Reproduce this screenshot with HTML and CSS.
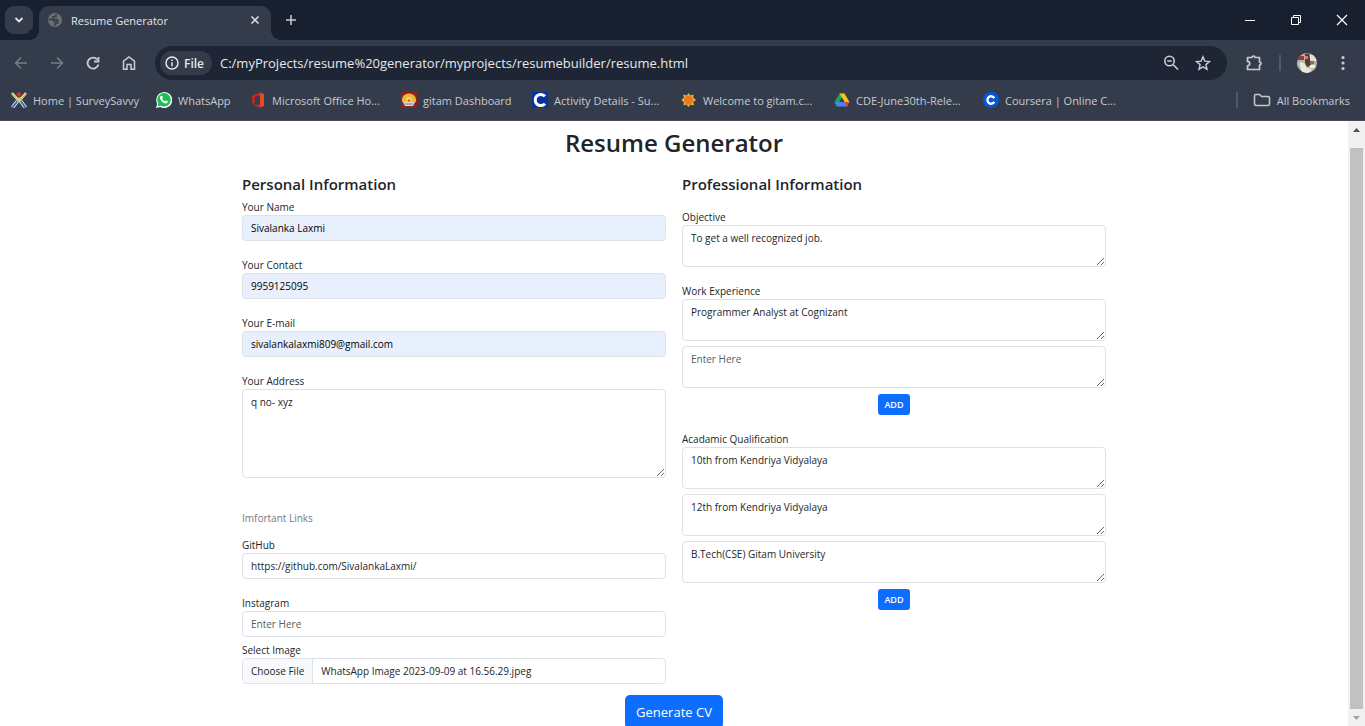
FILE: index.html
```html
<!DOCTYPE html>
<html lang="en">
<head>
<meta charset="utf-8">
<meta name="viewport" content="width=device-width, initial-scale=1">
<title>Resume Generator</title>
<link rel="stylesheet" href="styles.css">
</head>
<body>
<div class="browser">
  <header class="chrome">
    <div class="tabstrip">
      <button class="tab-search" aria-label="Search tabs"><svg width="10" height="10" viewBox="0 0 10 10"><path d="M1.5 3l3.5 3.5L8.500 3" fill="none" stroke="currentColor" stroke-width="1.8"/></svg></button>
      <div class="tab">
        <svg class="tab-icon" width="16" height="16" viewBox="0 0 16 16"><circle cx="8" cy="8" r="7" fill="#6c6e72"/><path d="M1.500 7.500H5q2 0 2 2h3.500M9 2v2.500H7.500q-2 0-2 1.500t2 1.500H9q2 0 2 2T9 11.500H8V14" fill="none" stroke="#343c4b" stroke-width="1.500"/></svg>
        <span class="tab-title">Resume Generator</span>
        <button class="icon-btn tab-close" aria-label="Close tab"><svg width="10" height="10" viewBox="0 0 10 10"><path d="M1.500 1.500l7 7M8.500 1.500l-7 7" stroke="currentColor" stroke-width="1.500"/></svg></button>
      </div>
      <button class="icon-btn new-tab" aria-label="New tab"><svg width="12" height="12" viewBox="0 0 12 12"><path d="M6 1v10M1 6h10" stroke="currentColor" stroke-width="1.500"/></svg></button>
      <div class="window-controls">
        <button class="icon-btn" aria-label="Minimize"><svg width="12" height="12" viewBox="0 0 12 12"><path d="M1 6.500h10" stroke="#fff"/></svg></button>
        <button class="icon-btn" aria-label="Restore"><svg width="12" height="12" viewBox="0 0 12 12"><path d="M1.500 3.500h7v7h-7zM3.500 3.500v-2h7v7h-2" fill="none" stroke="#fff"/></svg></button>
        <button class="icon-btn" aria-label="Close"><svg width="12" height="12" viewBox="0 0 12 12"><path d="M1 1l10 10M11 1L1 11" stroke="#fff" stroke-width="1.200"/></svg></button>
      </div>
    </div>

    <div class="toolbar">
      <nav class="nav-buttons" aria-label="Browser navigation">
        <button class="icon-btn dim" aria-label="Back"><svg width="16" height="16" viewBox="0 0 16 16"><path d="M14 8H3M8 2.500L2.500 8 8 13.500" fill="none" stroke="currentColor" stroke-width="1.500"/></svg></button>
        <button class="icon-btn dim" aria-label="Forward"><svg width="16" height="16" viewBox="0 0 16 16"><path d="M2 8h11M8 2.500L13.500 8 8 13.500" fill="none" stroke="currentColor" stroke-width="1.500"/></svg></button>
        <button class="icon-btn" aria-label="Reload"><svg width="16" height="16" viewBox="0 0 16 16"><path d="M13.400 9.500A5.500 5.500 0 1 1 12.300 4.500M13.500 2v4.500H9" fill="none" stroke="currentColor" stroke-width="1.800"/></svg></button>
        <button class="icon-btn" aria-label="Home"><svg width="16" height="16" viewBox="0 0 16 16"><path d="M2.500 6.200L8 2l5.500 4.200v8.100H10V9.500H6v4.800H2.500z" fill="none" stroke="currentColor" stroke-width="1.500"/></svg></button>
      </nav>
      <div class="omnibox">
        <button class="file-chip"><svg width="14" height="14" viewBox="0 0 14 14"><circle cx="7" cy="7" r="6" fill="none" stroke="currentColor" stroke-width="1.500"/><path d="M7 6.200v4M7 3.400v1.500" stroke="currentColor" stroke-width="1.500"/></svg>File</button>
        <input class="address" type="text" aria-label="Address" value="C:/myProjects/resume%20generator/myprojects/resumebuilder/resume.html">
        <button class="icon-btn" aria-label="Zoom"><svg width="16" height="16" viewBox="0 0 16 16"><circle cx="6.500" cy="6" r="4.700" fill="none" stroke="currentColor" stroke-width="1.600"/><path d="M4.300 6h4.400M10 9.500l5 5" stroke="currentColor" stroke-width="1.700"/></svg></button>
        <button class="icon-btn" aria-label="Bookmark this page"><svg width="16" height="16" viewBox="0 0 16 16"><path d="M8 1.800l1.800 4.300 4.700.4-3.600 3.100 1.100 4.600L8 11.800l-4 2.400 1.100-4.600L1.500 6.500l4.700-.4z" fill="none" stroke="currentColor" stroke-width="1.400"/></svg></button>
      </div>
      <div class="toolbar-end">
        <button class="icon-btn" aria-label="Extensions"><svg width="18" height="18" viewBox="0 0 18 18"><path d="M2.500 3.500h4.500a1.500 1.500 0 0 1 3 0h4.500V8a1.500 1.500 0 0 1 0 3v4.500h-12v-3.700a2.200 2.200 0 0 0 0-4.400z" fill="none" stroke="currentColor" stroke-width="1.700" stroke-linejoin="round"/></svg></button>
        <span class="divider"></span>
        <button class="icon-btn avatar" aria-label="Profile"><svg width="20" height="20" viewBox="0 0 20 20"><defs><clipPath id="face"><circle cx="10" cy="10" r="10"/></clipPath></defs><g clip-path="url(#face)"><path fill="#b9b7a4" d="M0 0h20v20H0z"/><path fill="#a5323b" d="M1 3h6v4H1z"/><path fill="#e0e2da" d="M13 2h7v6h-7z"/><path fill="#5a3930" d="M8 1l4-1 1 6 1 6-4 2-2-4z"/><path fill="#b98670" d="M8 3h3v3H8z"/><path fill="#e6ead8" d="M2 9l5 1 3 5 5 1-3 4H5z"/><path fill="#f1efe2" d="M13 12h5v3h-5z"/><path fill="#a8c3ae" d="M0 9h3v5H0z"/><path fill="#867052" d="M13 8h4v3h-4z"/></g></svg></button>
        <button class="icon-btn" aria-label="Menu"><svg width="4" height="16" viewBox="0 0 4 16"><g fill="currentColor"><circle cx="2" cy="2.500" r="1.600"/><circle cx="2" cy="8" r="1.600"/><circle cx="2" cy="13.500" r="1.600"/></g></svg></button>
      </div>
    </div>

    <nav class="bookmarks" aria-label="Bookmarks">
      <a class="bookmark" href="#"><svg width="16" height="16" viewBox="0 0 16 16"><path d="M1 1l6 7h2l6-7" fill="none" stroke="#efe9a0" stroke-width="2.600"/><path d="M1 1l5.500 7L6 11M15 1L9.500 8l.5 3" fill="none" stroke="#a39c3c" stroke-width=".8"/><path d="M6.500 9L1.500 15.500M9.500 9l5 6.500" stroke="#e8f0ff" stroke-width="3.600"/><path d="M6.500 9L1.500 15.500M9.500 9l5 6.500" stroke="#3468ae" stroke-width="2"/><path d="M6 5.500h4L9.500 10h-3z" fill="#d9cf6a"/><circle cx="8" cy="2.500" r="2.200" fill="#d9302c"/></svg><span>Home | SurveySavvy</span></a>
      <a class="bookmark" href="#"><svg width="16" height="16" viewBox="0 0 16 16"><path d="M0 16l1.200-4.200A8 8 0 1 1 4.300 15z" fill="#fff"/><path d="M1.500 14.500l.9-3a6.700 6.700 0 1 1 2.400 2.200z" fill="#18c052"/><path d="M5 3.800l1.300.2.600 1.800-.7.900c.7 1.300 1.500 2 2.800 2.600l1-.9 1.800.9c.1 1.500-1 2.400-2.400 2.100C6.500 11 4.300 8.500 4 6c0-1 .4-1.800 1-2.200z" fill="#fff"/></svg><span>WhatsApp</span></a>
      <a class="bookmark" href="#"><svg width="16" height="16" viewBox="0 0 16 16"><path d="M10 .5L3.500 3 2 4.500V12l3-1.500V5l5-1.500z" fill="#b92b1a"/><path d="M10 .5l4 1.500v12l-4 1.500z" fill="#ea4a1b"/><path d="M3 12.500l7 .5v2.500z" fill="#d52d22"/></svg><span>Microsoft Office Ho...</span></a>
      <a class="bookmark" href="#"><svg width="16" height="16" viewBox="0 0 16 16"><path fill="#942020" d="M0 0h16v16H0z"/><path d="M1 10V7.500A7 6 0 0 1 15 7.500V10z" fill="#f0b637"/><path d="M2 10h12l-2 4H4z" fill="#d7dce2"/><circle cx="8" cy="8" r="2.700" fill="#f5df77"/><circle cx="8" cy="8.500" r="1.500" fill="#e66a20"/><path d="M4 12h8" stroke="#3e83b1"/></svg><span>gitam Dashboard</span></a>
      <a class="bookmark" href="#"><svg width="16" height="16" viewBox="0 0 16 16"><path fill="#0732a2" d="M0 0h16v16H0z"/><path d="M13 4.300a5.600 5.600 0 1 0 0 7.400" fill="none" stroke="#fff" stroke-width="3"/></svg><span>Activity Details - Su...</span></a>
      <a class="bookmark" href="#"><svg width="16" height="16" viewBox="0 0 16 16"><path d="M7.500 1l1.800 2.500L12.500 2.500l-.3 3L15 8l-2.800 2 .8 3.500-3.500-1L7.500 15l-2-2.500L2.500 13.500l.5-3L.5 8 3 5.500l-1-3 3.700 1z" fill="#dfb943"/><circle cx="7.500" cy="8" r="4.500" fill="#ed791b"/></svg><span>Welcome to gitam.c...</span></a>
      <a class="bookmark" href="#"><svg width="16" height="16" viewBox="0 0 16 16"><path d="M5.500 1.500h5L5.500 10 3 14.500.5 10z" fill="#1aa453"/><path d="M5.500 1.500h5l5 8.500h-5z" fill="#fbc116"/><path d="M.5 10h15L13 14.500H3z" fill="#4b84ed"/><path d="M10.500 10h5L13 14.500z" fill="#e34234"/><path d="M8 6l2.500 4h-5z" fill="#343c4b"/></svg><span>CDE-June30th-Rele...</span></a>
      <a class="bookmark" href="#"><svg width="16" height="16" viewBox="0 0 16 16"><circle cx="8" cy="8" r="8" fill="#0756d8"/><path d="M11.300 6.100a3.700 3.700 0 1 0 0 3.800" fill="none" stroke="#fff" stroke-width="2.400"/></svg><span>Coursera | Online C...</span></a>
      <span class="divider bookmark-divider"></span>
      <a class="bookmark" href="#"><svg width="18" height="16" viewBox="0 0 18 16"><path d="M2.500 2.500h4l2 2h6.500q1.500 0 1.500 1.500v6q0 1.500-1.500 1.500h-12Q1.500 13.500 1.500 12V4q0-1.500 1-1.500z" fill="none" stroke="#c7c9ce" stroke-width="1.500"/></svg><span>All Bookmarks</span></a>
    </nav>
  </header>

  <div class="viewport">
    <main class="page">
      <h1>Resume Generator</h1>
      <form class="resume-form">
        <section class="column">
          <h2>Personal Information</h2>
          <div class="field"><label for="name">Your Name</label><input class="control filled" id="name" type="text" value="Sivalanka Laxmi"></div>
          <div class="field"><label for="contact">Your Contact</label><input class="control filled" id="contact" type="text" value="9959125095"></div>
          <div class="field"><label for="email">Your E-mail</label><input class="control filled" id="email" type="text" value="sivalankalaxmi809@gmail.com"></div>
          <div class="field"><label for="address">Your Address</label><textarea class="control tall" id="address">q no- xyz</textarea></div>
          <p class="muted">Imfortant Links</p>
          <div class="field"><label for="github">GitHub</label><input class="control" id="github" type="text" value="https://github.com/SivalankaLaxmi/"></div>
          <div class="field close"><label for="instagram">Instagram</label><input class="control" id="instagram" type="text" placeholder="Enter Here"></div>
          <div class="field last"><label for="image">Select Image</label><input class="control" id="image" type="file"></div>
        </section>
        <section class="column">
          <h2 class="spaced">Professional Information</h2>
          <div class="field"><label for="objective">Objective</label><textarea class="control" id="objective">To get a well recognized job.</textarea></div>
          <div class="field stack"><label for="work">Work Experience</label><textarea class="control" id="work">Programmer Analyst at Cognizant</textarea><textarea class="control" aria-label="More work experience" placeholder="Enter Here"></textarea><button class="add" type="button">ADD</button></div>
          <div class="field stack"><label for="study">Acadamic Qualification</label><textarea class="control" id="study">10th from Kendriya Vidyalaya</textarea><textarea class="control" aria-label="Second qualification">12th from Kendriya Vidyalaya</textarea><textarea class="control" aria-label="Third qualification">B.Tech(CSE) Gitam University</textarea><button class="add" type="button">ADD</button></div>
        </section>
        <button class="generate" type="button">Generate CV</button>
      </form>
    </main>
    <div class="scrollbar" aria-hidden="true">
      <svg width="17" height="17" viewBox="0 0 17 17"><path d="M5 11l3.500-4L12 11z" fill="#505050"/></svg>
      <div class="thumb"></div>
      <svg width="17" height="17" viewBox="0 0 17 17"><path d="M5 7l3.500 4L12 7z" fill="#a3a3a3"/></svg>
    </div>
  </div>
</div>
<script src="script.js"></script>
</body>
</html>
```
FILE: styles.css
```css
* { box-sizing: border-box; }
body { margin: 0; font-family: "Open Sans", "Noto Sans", sans-serif; color: #212529; background: #fff; }
button, input, textarea { font-family: inherit; margin: 0; }
svg { display: block; flex: none; }

.browser { display: flex; flex-direction: column; height: 100vh; overflow: hidden; }

/* browser frame */
.chrome { flex: none; background: #343c4b; color: #c7cad1; border-bottom: 1px solid #474b53; font-size: 11px; }
.icon-btn { display: flex; align-items: center; justify-content: center; padding: 0; border: 0; background: none; color: #c7cbda; flex: none; }
.tabstrip { display: flex; align-items: center; height: 40px; background: #18202f; padding-left: 5px; }
.tab-search { display: flex; align-items: center; justify-content: center; width: 28px; height: 28px; padding: 0; border: 0; border-radius: 9px; background: #343c4b; color: #e4e6ea; }
.tab { position: relative; display: flex; align-items: center; gap: 8px; width: 232px; height: 34px; margin: 6px 0 0 6px; padding: 0 10px 6px 8px; border-radius: 10px 10px 0 0; background: #343c4b; color: #e3e5e8; }
.tab::before, .tab::after { content: ""; position: absolute; bottom: 0; width: 10px; height: 10px; }
.tab::before { right: 100%; background: radial-gradient(circle at 0 0, #18202f 10px, #343c4b 10px); }
.tab::after { left: 100%; background: radial-gradient(circle at 100% 0, #18202f 10px, #343c4b 10px); }
.tab-title { flex: 1; }
.tab-close { color: #e3e5e8; width: 12px; }
.new-tab { margin-left: 14px; }
.window-controls { display: flex; margin-left: auto; }
.window-controls .icon-btn { width: 46px; height: 40px; }

.toolbar { display: flex; align-items: center; height: 46px; padding: 0 20px 0 13px; }
.nav-buttons { display: flex; gap: 20px; margin-right: 18px; }
.nav-buttons .icon-btn { width: 16px; }
.dim { color: #767d8c; }
.omnibox { display: flex; align-items: center; flex: 1; height: 34px; padding: 0 16px 0 5px; border-radius: 17px; background: #1e2635; }
.omnibox .icon-btn { margin-left: 16px; }
.file-chip { display: flex; align-items: center; gap: 5px; height: 24px; padding: 0 8px 0 5px; border: 0; border-radius: 12px; background: #343c4b; color: #e6e8eb; font-size: 12px; font-weight: 600; }
.address { flex: 1; min-width: 0; margin-left: 8px; padding: 0; border: 0; background: none; color: #e6e8eb; font-size: 13px; }
.toolbar-end { display: flex; align-items: center; gap: 16px; margin-left: 18px; }
.toolbar-end .avatar { margin-right: 8px; }
.divider { width: 2px; height: 16px; background: #505869; flex: none; }

.bookmarks { display: grid; grid-template-columns: 145px 94px 151px 131px 149px 153px 149px 1fr auto auto; align-items: center; height: 34px; padding: 0 15px 6px 11px; }
.bookmark { display: flex; align-items: center; gap: 6px; color: inherit; text-decoration: none; white-space: nowrap; }
.bookmark-divider { margin-right: 15px; }

/* page */
.viewport { flex: 1; min-height: 0; display: flex; }
.page { flex: 1; min-width: 0; overflow: hidden; padding-top: 6px; }
h1 { margin: 0 0 15px; text-align: center; font-size: 24px; line-height: 32px; font-weight: 600; }
.resume-form { display: grid; grid-template-columns: 1fr 1fr; column-gap: 16px; max-width: 880px; margin: 0 auto; padding: 0 8px; }
.column { min-width: 0; }
h2 { margin: 0 0 5px; font-size: 15px; line-height: 20px; font-weight: 600; }
h2.spaced { margin-bottom: 15px; }
.field { display: flex; flex-direction: column; margin-bottom: 16px; font-size: 10px; line-height: 16px; }
.control { display: block; width: 100%; height: 26px; padding: 4px 8px; border: 1px solid #dee2e6; border-radius: 4px; background: #fff; color: #212529; font-size: 10px; line-height: 16px; }
textarea.control { height: 42px; resize: vertical; }
textarea.tall { height: 89px; }
.filled { background: #e8effd; color: #000; }
.control::placeholder { color: #595c5f; opacity: 1; }
.stack .control + .control { margin-top: 5px; }
.muted { margin: 32px 0 11px; color: #75797d; font-size: 10px; line-height: 16px; }
.close { margin-bottom: 5px; }
.last { margin-bottom: 11px; }
input[type="file"] { overflow: hidden; }
input[type="file"]::file-selector-button { height: 26px; margin: -5px 8px 0 -8px; padding: 0 8px; border: 0; border-right: 1px solid #dee2e6; background: #f8f9fa; color: #212529; font: inherit; }
.add { align-self: center; height: 21px; margin-top: 6px; padding: 0 6px; border: 0; border-radius: 3px; background: #0d6efd; color: #fff; font-size: 9px; font-weight: 600; }
.generate { grid-column: 1 / -1; justify-self: center; height: 34px; padding: 0 11px; border: 0; border-radius: 5px; background: #0d6efd; color: #fff; font-size: 13px; }

.scrollbar { display: flex; flex-direction: column; align-items: center; width: 17px; background: #f1f1f1; }
.thumb { flex: 1; width: 13px; margin-top: 10px; background: #c1c1c1; }
```
FILE: script.js
```js
const picked = new DataTransfer();
picked.items.add(new File([""], "WhatsApp Image 2023-09-09 at 16.56.29.jpeg", { type: "image/jpeg" }));
document.getElementById("image").files = picked.files;
```
